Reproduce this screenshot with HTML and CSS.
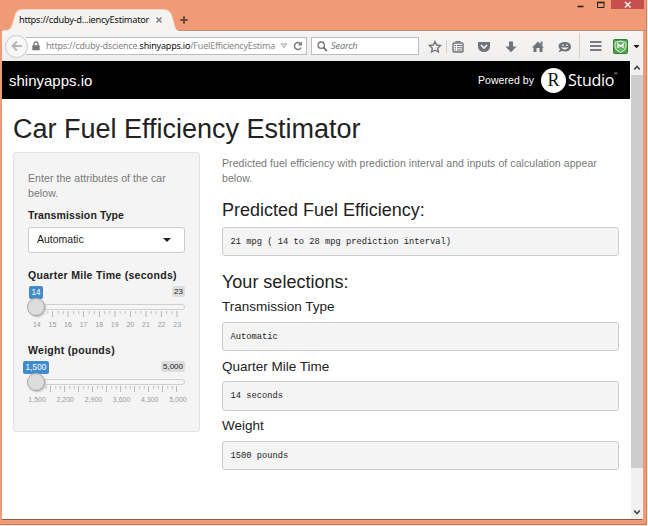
FILE: index.html
```html
<!DOCTYPE html>
<html lang="en">
<head>
<meta charset="utf-8">
<title>Car Fuel Efficiency Estimator</title>
<link rel="stylesheet" href="styles.css">
</head>
<body>
<div class="window">
  <div class="titlebar">
    <div class="tabs">
      <svg class="tab-shape" width="176" height="24" viewBox="0 0 176 24"><path d="M0 24V22.500H3C10 22.500 10 17 12 11C14 4 15 1.500 21 1.500H161C168 1.500 169 5 171 12C173 18 173 22.500 176 22.500V24Z" fill="#f4f3f2" stroke="#fae0d2" stroke-width=".6"/></svg>
      <span class="tab-title">https://cduby-d...iencyEstimator</span>
      <svg class="tab-close" width="8" height="8" viewBox="0 0 8 8"><path d="M1.500 1.500L6.500 6.500M6.500 1.500L1.500 6.500" stroke="#858585" stroke-width="1.700"/></svg>
      <svg class="tab-new" width="8" height="8" viewBox="0 0 8 8"><path d="M4 .3V7.700M.3 4H7.700" stroke="#4a342a" stroke-width="1.500"/></svg>
    </div>
    <div class="controls">
      <svg width="62" height="10" viewBox="0 0 62 10"><path d="M28.500 6.500H34.500" stroke="#2b201b" stroke-width="1.600"/><path d="M48.500 2.500V7.500H55V2.500" fill="none" stroke="#2b201b"/><path d="M48 2.500H55.500" stroke="#2b201b" stroke-width="1.600"/></svg>
      <div class="close"><svg width="8" height="9" viewBox="0 0 8 9"><path d="M1 2L6.500 7.500M6.500 2L1 7.500" stroke="#fff" stroke-width="1.300"/></svg></div>
    </div>
  </div>
  <div class="toolbar">
    <div class="back"><svg width="12" height="12" viewBox="0 0 12 12"><path d="M1 6H11M6 1.500L1.500 6L6 10.500" fill="none" stroke="#b8b8b8" stroke-width="2"/></svg></div>
    <div class="url">
      <svg class="lock" width="8" height="10" viewBox="0 0 8 10"><path d="M2 5V3A2 2 0 0 1 6 3V5" fill="none" stroke="#777" stroke-width="1.300"/><rect x=".3" y="4.300" width="7.400" height="5" rx=".5" fill="#777"/></svg>
      <span class="address">https://cduby-dscience.<b>shinyapps.io</b>/FuelEfficiencyEstima</span>
      <svg width="8" height="6" viewBox="0 0 8 6"><path d="M.8 .8H7L3.900 5Z" fill="#ddd" stroke="#aaa" stroke-width=".8"/></svg>
      <svg class="reload" width="10" height="10" viewBox="0 0 10 10"><path d="M8.100 6.500A3.500 3.500 0 1 1 7.500 2.600" fill="none" stroke="#777" stroke-width="1.400"/><path d="M8.900 .5V4.500H5Z" fill="#777"/></svg>
    </div>
    <div class="search">
      <svg width="11" height="11" viewBox="0 0 11 11"><circle cx="4.200" cy="4.200" r="3.200" fill="none" stroke="#777" stroke-width="1.300"/><path d="M6.500 6.500L10 10" stroke="#777" stroke-width="1.800"/></svg>
      <span>Search</span>
    </div>
    <svg class="tools" width="218" height="31" viewBox="0 0 218 31">
      <g fill="none" stroke="#70747a" stroke-width="1.400">
        <path d="M10 10.500L11.700 14L15.500 14.500L12.700 17.200L13.400 21L10 19.200L6.600 21L7.300 17.200L4.500 14.500L8.300 14Z"/>
        <path d="M21.500 9.500V22" stroke="#d0d0d0" stroke-width="1"/>
        <rect x="28" y="12" width="10" height="9" rx="1"/><path d="M31 11.500V10.500H35V11.500M29.500 14.500H31M32 14.500H37M29.500 16.800H31M32 16.800H37M29.500 19H31M32 19H37" stroke-width="1.100"/>
      </g>
      <g fill="#70747a">
        <path d="M53 11H65V15.500A6 5.500 0 0 1 53 15.500Z"/><path d="M56 14L59 17L62 14" fill="none" stroke="#f4f3f2" stroke-width="1.600"/>
        <path d="M84 10.500H88V15.500H91.500L86 21.300L80.500 15.500H84Z"/>
        <path d="M107 16.500L113 10.500L119 16.500H117.500V21H114.500V17H111.500V21H108.500V16.500Z"/><path d="M115.500 10.500H117.500V14H115.500Z"/>
        <path d="M140 11C143.500 11 146 13 146 15.700S143.500 20.500 140 20.500C138.800 20.500 137.800 20.300 137 20L133.500 21.500L135 18.500C131 13 136 11 140 11Z"/>
      </g>
      <path d="M138 13.500V15M142 13.500V15" stroke="#f4f3f2" stroke-width="1.300"/><path d="M136 16.500Q140 20.500 143.500 16.500Z" fill="#f4f3f2"/>
      <path d="M154.500 2V27" stroke="#cfcfcf"/>
      <path d="M165 11H176.500M165 15H176.500M165 19H176.500" stroke="#777a7e" stroke-width="2"/>
      <rect x="188.500" y="8.500" width="14" height="14" rx="1" fill="#49a447" stroke="#357e35"/><path d="M190 11.500L195.500 10L201 11.500V16Q201 19 195.500 21.500Q190 19 190 16Z" fill="#63b460" stroke="#e9f5e7"/><path d="M193 17V13L195.500 15.500L198 13V17" fill="none" stroke="#fff" stroke-width="1.300"/>
      <path d="M208.500 14H214.500L211.500 17.300Z" fill="#111"/>
    </svg>
  </div>
  <div class="viewport">
    <div class="page">
      <header class="site-header">
        <span class="brand">shinyapps.io</span>
        <span class="powered">Powered by</span>
        <span class="r-ball">R</span><span class="studio">Studio</span><span class="reg">®</span>
      </header>
      <main>
        <h1>Car Fuel Efficiency Estimator</h1>
        <div class="columns">
          <aside class="well">
            <p class="help">Enter the attributes of the car below.</p>
            <label class="compact">Transmission Type</label>
            <div class="select"><span>Automatic</span><i></i></div>
            <label>Quarter Mile Time (seconds)</label>
            <div class="slider">
              <div class="values"><span class="current">14</span><span class="max">23</span></div>
              <div class="track"><i class="knob"></i></div>
              <svg class="ticks" width="157" height="8" viewBox="0 0 157 8"><path d="M9 1V7M24.500 1V7M40 1V7M55.500 1V7M71.500 1V7M87 1V7M102.500 1V7M118 1V7M133.500 1V7M149 1V7" stroke="#a0a8b0" stroke-width=".8"/><path d="M19.800 1V4M30.200 1V4M35.300 1V4M45.700 1V4M50.800 1V4M61.200 1V4M66.300 1V4M76.700 1V4M81.800 1V4M92.200 1V4M97.300 1V4M107.700 1V4M112.800 1V4M123.200 1V4M128.300 1V4M138.700 1V4M143.800 1V4" stroke="#b0b6bc" stroke-width=".8"/></svg>
              <div class="scale ten"><span>14</span><span>15</span><span>16</span><span>17</span><span>18</span><span>19</span><span>20</span><span>21</span><span>22</span><span>23</span></div>
            </div>
            <label>Weight (pounds)</label>
            <div class="slider weight">
              <div class="values"><span class="current">1,500</span><span class="max">5,000</span></div>
              <div class="track"><i class="knob"></i></div>
              <svg class="ticks" width="157" height="8" viewBox="0 0 157 8"><path d="M9 1V7M22.500 1V7M36.500 1V7M50.500 1V7M64.500 1V7M78.500 1V7M92.500 1V7M106.500 1V7M120.500 1V7M134.500 1V7M148.500 1V7" stroke="#a0a8b0" stroke-width=".8"/><path d="M18.300 1V4M27.700 1V4M32.300 1V4M41.700 1V4M46.300 1V4M55.700 1V4M60.300 1V4M69.700 1V4M74.300 1V4M83.700 1V4M88.300 1V4M97.700 1V4M102.300 1V4M111.700 1V4M116.300 1V4M125.700 1V4M130.300 1V4M139.700 1V4M144.300 1V4" stroke="#b0b6bc" stroke-width=".8"/></svg>
              <div class="scale six"><span>1,500</span><span>2,200</span><span>2,900</span><span>3,600</span><span>4,300</span><span>5,000</span></div>
            </div>
          </aside>
          <section class="results">
            <p class="help">Predicted fuel efficiency with prediction interval and inputs of calculation appear below.</p>
            <h3>Predicted Fuel Efficiency:</h3>
            <pre>21 mpg ( 14 to 28 mpg prediction interval)</pre>
            <h3 class="selections">Your selections:</h3>
            <h4>Transmission Type</h4>
            <pre>Automatic</pre>
            <h4>Quarter Mile Time</h4>
            <pre>14 seconds</pre>
            <h4>Weight</h4>
            <pre>1500 pounds</pre>
          </section>
        </div>
      </main>
    </div>
    <div class="scrollbar">
      <svg width="12" height="14" viewBox="0 0 12 14"><path d="M3.200 8.500L6 5.500L8.800 8.500" fill="none" stroke="#444" stroke-width="1.600"/></svg>
      <i class="thumb"></i>
      <svg class="down" width="12" height="14" viewBox="0 0 12 14"><path d="M3.200 5.500L6 8.500L8.800 5.500" fill="none" stroke="#444" stroke-width="1.600"/></svg>
    </div>
  </div>
  <div class="frame-bottom"></div>
</div>
</body>
</html>
```
FILE: styles.css
```css
* { box-sizing: border-box; }
body { margin: 0; width: 648px; height: 526px; overflow: hidden; background: #fbe9df; font-family: "Liberation Sans", Arial, sans-serif; font-size: 10.5px; line-height: 15px; color: #222; }
svg { display: block; flex: none; }
h1, h3, h4, p, pre { margin: 0; font-weight: 400; white-space: nowrap; }

.window { width: 647px; height: 525px; background: #f19b76; border-right: 1px solid #c98465; border-bottom: 1px solid #b87455; }
.titlebar { height: 31px; display: flex; justify-content: space-between; border-bottom: 1px solid #c08d77; }
.tabs { position: relative; display: flex; align-items: flex-start; height: 31px; }
.tab-shape { position: absolute; left: 2px; top: 8px; }
.tab-title { position: relative; margin: 12px 0 0 19px; width: 130px; font: 9.3px/15px "Noto Sans", sans-serif; letter-spacing: -.28px; color: #111; white-space: nowrap; }
.tab-close { position: relative; margin: 16px 0 0 6px; }
.tab-new { margin: 16px 0 0 17px; }
.controls { display: flex; align-items: flex-start; }
.close { width: 33px; height: 9px; background: #c7504f; display: flex; justify-content: center; margin-right: 2px; }

.toolbar { position: relative; margin: 0 3px 0 2px; height: 30px; background: linear-gradient(#f6f5f4, #efeeed); display: flex; align-items: center; }
.back { flex: none; width: 23px; height: 23px; border: 1px solid #c8c8c8; border-radius: 50%; background: #f8f8f8; margin-left: 3px; display: flex; align-items: center; justify-content: center; z-index: 1; }
.url { flex: none; width: 281px; height: 18px; margin-left: -2px; border: 1px solid #bcbcbf; border-left: 0; background: #fff; display: flex; align-items: center; padding-left: 6px; }
.address { flex: none; width: 231px; margin: 0 3px 0 6px; font: 9px/16px "Noto Sans", sans-serif; letter-spacing: -.2px; color: #858585; white-space: nowrap; }
.address b { font-weight: 400; color: #111; }
.reload { margin-left: 5px; }
.search { flex: none; width: 108px; height: 18px; margin-left: 4px; border: 1px solid #bcbcbf; background: #fff; display: flex; align-items: center; gap: 3px; padding-left: 5px; font: italic 9.3px/16px "Noto Sans", sans-serif; letter-spacing: -.2px; color: #777; }
.tools { margin-left: 6px; }

.viewport { display: flex; margin: 0 4px 0 2px; height: 459px; border-bottom: 1px solid #8d5a44; background: #fff; }
.page { flex: none; width: 628px; }
.site-header { height: 38px; background: #000; color: #fff; display: flex; align-items: center; padding-left: 7px; }
.brand { width: 469px; font-size: 15px; }
.powered { width: 63px; letter-spacing: .05px; }
.r-ball { width: 25px; height: 25px; border-radius: 50%; background: #fff; color: #111; text-align: center; font: 18px/25px "Liberation Serif", serif; }
.studio { margin-left: 2px; font: 16px/24px "Open Sans", sans-serif; letter-spacing: -.25px; }
.reg { font-size: 4px; line-height: 4px; margin-top: -12px; }
.scrollbar { width: 13px; background: #f0f0f0; border-left: 1px solid #fff; display: flex; flex-direction: column; }
.thumb { height: 393px; background: #cdcdcd; }
.down { margin-top: auto; }

main { padding-left: 11px; }
h1 { font-size: 27px; line-height: 30px; padding-top: 15px; height: 52.500px; }
.columns { display: flex; align-items: flex-start; }
.well { width: 187px; height: 280px; background: #f4f4f4; border: 1px solid #e2e2e2; border-radius: 3px; padding: 18px 14px 0; }
.help { color: #777; white-space: normal; letter-spacing: .075px; }
.well label { display: block; height: 15px; margin-top: 7px; font-weight: 700; letter-spacing: .29px; white-space: nowrap; }
.well .compact { letter-spacing: .1px; }
.select { width: 157px; height: 26px; margin: 4px 0 15px; border: 1px solid #ccc; border-radius: 3px; background: #fff; display: flex; align-items: center; justify-content: space-between; padding: 0 13px 0 8px; }
.select i { border: 4px solid transparent; border-top-color: #222; border-bottom: 0; }
.slider { width: 157px; height: 53px; }
.values { display: flex; justify-content: space-between; align-items: flex-start; height: 21px; padding: 3px 0 0 1px; font-size: 8.200px; line-height: 13px; white-space: nowrap; }
.current { background: #428bca; color: #fff; border-radius: 2px; padding: 0 2.500px; }
.weight .current { margin-left: -6px; letter-spacing: .1px; }
.max { background: #ddd; border-radius: 2px; padding: 0 2px; line-height: 11px; font-size: 8px; }
.track { position: relative; height: 6px; border: 1px solid #d0d0d0; border-radius: 4px; background: #f5f5f5; }
.knob { position: absolute; left: -2px; top: -7px; width: 18px; height: 18px; border: 1px solid #aaa; border-radius: 50%; background: #ddd; box-shadow: 1px 1px 2px #bbb; }
.scale { display: flex; height: 13px; font-size: 7px; line-height: 13px; color: #999; }
.scale span { flex: 1; text-align: center; white-space: nowrap; }
.ten { margin: 0 0 0 1px; }
.six { margin: 0 -7px 0 -5px; }

.results { width: 397px; margin-left: 22px; padding-top: 4px; }
h3 { font-size: 18px; line-height: 20px; height: 27px; margin-top: 14px; }
h3.selections { margin-top: 16px; }
h4 { font-size: 13.500px; line-height: 15px; height: 22.500px; }
pre { height: 29.500px; border: 1px solid #ccc; border-radius: 3px; background: #f4f4f4; padding-left: 7.500px; font: 8.750px/29px "Liberation Mono", monospace; color: #222; margin-bottom: 7.500px; }
.frame-bottom { height: 4px; }
```
